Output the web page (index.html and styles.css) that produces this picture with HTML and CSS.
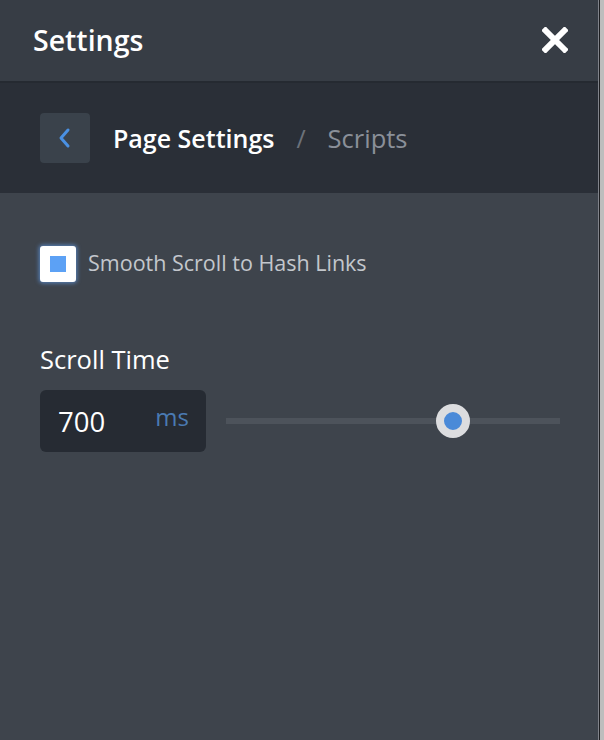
FILE: index.html
```html
<!DOCTYPE html>
<html>
<head>
<meta charset="utf-8">
<link rel="stylesheet" href="styles.css">
</head>
<body>
<div class="frame">
  <div class="panel">
    <header class="header">
      <h1 class="title">Settings</h1>
      <button class="close" aria-label="Close">
        <svg width="26" height="26" viewBox="0 0 26 26"><path d="M3.5 3.5 L22.5 22.5 M22.5 3.5 L3.5 22.5" stroke="#fff" stroke-width="6" stroke-linecap="square"/></svg>
      </button>
    </header>
    <nav class="crumbs">
      <button class="back" aria-label="Back">
        <svg width="14" height="22" viewBox="0 0 14 22"><path d="M10 3 L3 11 L10 19" fill="none" stroke="#4a90e2" stroke-width="3" stroke-linecap="round" stroke-linejoin="round"/></svg>
      </button>
      <span class="crumb-current">Page Settings</span>
      <span class="crumb-sep">/</span>
      <span class="crumb-next">Scripts</span>
    </nav>
    <main class="content">
      <label class="check-row">
        <span class="checkbox"><span class="checkbox-mark"></span></span>
        <span class="check-label">Smooth Scroll to Hash Links</span>
      </label>
      <div class="field">
        <div class="field-label">Scroll Time</div>
        <div class="field-row">
          <div class="num-input">
            <span class="num-value">700</span>
            <span class="num-unit">ms</span>
          </div>
          <div class="slider">
            <div class="slider-track"></div>
            <div class="slider-thumb" style="left: 68%"></div>
          </div>
        </div>
      </div>
    </main>
  </div>
  <div class="edge"></div>
</div>
</body>
</html>
```
FILE: styles.css
```css
* { box-sizing: border-box; }
html, body { margin: 0; padding: 0; height: 100%; }
body {
  font-family: "Open Sans", "Noto Sans", sans-serif;
  background: #c4c4c4;
}
.frame { display: flex; height: 740px; width: 604px; }
.panel {
  width: 598px;
  height: 740px;
  background: #3e444c;
  display: flex;
  flex-direction: column;
}
.edge {
  width: 6px;
  border-left: 1px solid #80838a;
  box-shadow: inset 1px 0 0 #1e1f22;
  background: #bdbdbd;
}
.header {
  height: 83px;
  background: #373d45;
  border-bottom: 2px solid #252a31;
  display: flex;
  align-items: center;
  justify-content: space-between;
  padding: 0 30px 2px 33px;
}
.title {
  margin: 0;
  color: #fff;
  font-size: 28.5px;
  font-weight: 600;
  line-height: 36px;
}
.close {
  background: none;
  border: 0;
  padding: 0;
  display: flex;
}
.crumbs {
  height: 110px;
  background: #2a2f37;
  display: flex;
  align-items: center;
  padding: 0 0 0 40px;
}
.back {
  width: 50px;
  height: 50px;
  border: 0;
  border-radius: 4px;
  background: #3a424b;
  display: flex;
  align-items: center;
  justify-content: center;
  padding: 0;
  margin-right: 23px;
}
.crumb-current {
  color: #fff;
  font-size: 25px;
  font-weight: 600;
}
.crumb-sep {
  color: #6c727a;
  font-size: 25px;
  margin: 0 22px 0 22px;
}
.crumb-next {
  color: #8a9099;
  font-size: 25.5px;
}
.content {
  padding: 53px 38px 0 40px;
}
.check-row {
  display: flex;
  align-items: center;
  gap: 12px;
}
.checkbox {
  width: 36px;
  height: 36px;
  border-radius: 3px;
  background: #fff;
  box-shadow: 0 0 4px 1px rgba(100, 160, 240, 0.7);
  display: flex;
  align-items: center;
  justify-content: center;
}
.checkbox-mark {
  width: 16px;
  height: 16px;
  background: #5ca1f5;
}
.check-label {
  color: #c3c7cc;
  font-size: 21.5px;
  margin-top: -4px;
}
.field { margin-top: 62px; }
.field-label {
  color: #fff;
  font-size: 25.5px;
  line-height: 30px;
  margin-bottom: 16px;
}
.field-row {
  display: flex;
  align-items: center;
  gap: 20px;
}
.num-input {
  width: 166px;
  height: 62px;
  border-radius: 6px;
  background: #262b33;
  display: flex;
  align-items: center;
  justify-content: space-between;
  padding: 0 17px 4px 18px;
}
.num-value {
  color: #fff;
  font-size: 27.5px;
  margin-top: 4px;
}
.num-unit {
  color: #4a7ab2;
  font-size: 24px;
  margin-top: -6px;
}
.slider {
  position: relative;
  flex: 1;
  height: 36px;
  display: flex;
  align-items: center;
}
.slider-track {
  width: 100%;
  height: 6px;
  background: #4d535b;
}
.slider-thumb {
  position: absolute;
  top: 1px;
  width: 34px;
  height: 34px;
  margin-left: -17px;
  border-radius: 50%;
  background: #4a8ad8;
  border: 8px solid #dcdddf;
}
```
